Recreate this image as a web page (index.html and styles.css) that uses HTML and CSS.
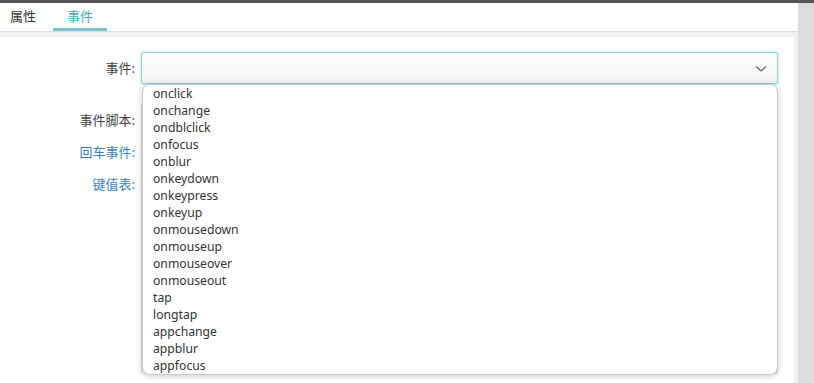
FILE: index.html
```html
<!DOCTYPE html>
<html lang="zh">
<head>
    <meta charset="UTF-8">
    <title>事件</title>
    <link rel="stylesheet" href="styles.css">
</head>
<body>
    <div class="topbar"></div>
    <div class="page">
        <div class="main">
            <div class="tabs">
                <div class="tab">属性</div>
                <div class="tab active">事件</div>
            </div>
            <div class="panel-wrap">
                <div class="panel">
                    <div class="form">
                        <div class="row row-select">
                            <label class="label">事件:</label>
                            <div class="field">
                                <div class="select">
                                    <svg class="chevron" width="12" height="8" viewBox="0 0 12 8">
                                        <path d="M1 1.5 L6 6 L11 1.5" fill="none" stroke="#666" stroke-width="1.3"/>
                                    </svg>
                                </div>
                                <ul class="dropdown">
                                    <li>onclick</li>
                                    <li>onchange</li>
                                    <li>ondblclick</li>
                                    <li>onfocus</li>
                                    <li>onblur</li>
                                    <li>onkeydown</li>
                                    <li>onkeypress</li>
                                    <li>onkeyup</li>
                                    <li>onmousedown</li>
                                    <li>onmouseup</li>
                                    <li>onmouseover</li>
                                    <li>onmouseout</li>
                                    <li>tap</li>
                                    <li>longtap</li>
                                    <li>appchange</li>
                                    <li>appblur</li>
                                    <li>appfocus</li>
                                </ul>
                            </div>
                        </div>
                        <div class="row row-script">
                            <label class="label">事件脚本:</label>
                            <div class="field">
                                <div class="script-box"></div>
                            </div>
                        </div>
                        <div class="row">
                            <label class="label link">回车事件:</label>
                        </div>
                        <div class="row">
                            <label class="label link">键值表:</label>
                        </div>
                    </div>
                </div>
            </div>
        </div>
        <div class="gutter"></div>
    </div>
</body>
</html>
```

FILE: styles.css
```css
* {
    margin: 0;
    padding: 0;
    box-sizing: border-box;
}

html, body {
    height: 383px;
    overflow: hidden;
}

body {
    font-family: "Noto Sans", "Noto Sans CJK SC", sans-serif;
    font-size: 13px;
    color: #333;
    background: #dcdcdc;
}

.topbar {
    height: 3px;
    background: #555;
}

.page {
    display: flex;
    height: 380px;
}

.main {
    width: 798px;
    display: flex;
    flex-direction: column;
    background: #eef2f4;
}

.gutter {
    flex: 1;
    background: #dcdcdc;
}

.tabs {
    display: flex;
    height: 29px;
    background: white;
    border-bottom: 1px solid #dcdfe2;
}

.tab {
    width: 54px;
    text-align: center;
    line-height: 26px;
    color: #333;
    font-family: "Noto Sans CJK SC", sans-serif;
    font-size: 13px;
}

.tab:first-child {
    width: 46px;
    text-align: left;
    padding-left: 10px;
}

.tab:first-child + .tab {
    margin-left: 7px;
}

.tab.active {
    color: #4aabb4;
    border-bottom: 3px solid #7cc5cb;
}

.panel-wrap {
    flex: 1;
    min-height: 0;
    padding: 5px 4px 0 0;
}

.panel {
    height: 100%;
    background: white;
    overflow: hidden;
}

.form {
    padding-top: 15px;
}

.row {
    display: flex;
    align-items: flex-start;
}

.label {
    width: 141px;
    padding-right: 6px;
    text-align: right;
    font-family: "Noto Sans CJK SC", sans-serif;
    color: #444;
    line-height: 32px;
}

.label.link {
    color: #3b7fc4;
}

.field {
    width: 637px;
    position: relative;
}

.select {
    height: 32px;
    border: 1px solid #8ed5d5;
    border-radius: 2px;
    background: linear-gradient(#ffffff, #f3f3f3);
    box-shadow: 0 0 3px rgba(110, 200, 205, 0.6);
    position: relative;
}

.chevron {
    position: absolute;
    right: 10px;
    top: 12px;
}

.row-script {
    margin-top: 20px;
}

.script-box {
    height: 270px;
    background: linear-gradient(to right, #f4f4f4, #e4e4e4);
    border-left: 1px solid #ddd;
}

.row + .row + .row {
    margin-top: -238px;
}

.row + .row + .row + .row {
    margin-top: 0;
}

.dropdown {
    position: absolute;
    left: 1px;
    right: 0;
    top: 32px;
    z-index: 5;
    list-style: none;
    background: white;
    border: 1px solid #c9c9c9;
    border-radius: 8px;
    box-shadow: 0 1px 6px rgba(0, 0, 0, 0.22);
    padding: 0;
    height: 291px;
}

.dropdown li {
    height: 17px;
    line-height: 18px;
    padding-left: 10px;
    color: #333;
    font-family: "Noto Sans", sans-serif;
    font-size: 12.2px;
}
```
